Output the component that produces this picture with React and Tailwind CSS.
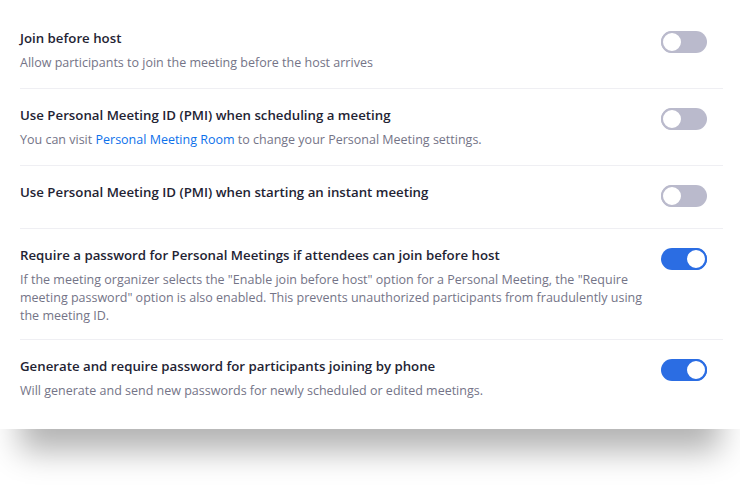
import React, { useState } from "react";

const settings = [
  {
    id: "jbh",
    title: "Join before host",
    desc: "Allow participants to join the meeting before the host arrives",
    on: false,
    pb: "pb-4",
  },
  {
    id: "pmi-schedule",
    title: "Use Personal Meeting ID (PMI) when scheduling a meeting",
    desc: (
      <>
        You can visit{" "}
        <a href="#" className="text-[#0e71eb]">
          Personal Meeting Room
        </a>{" "}
        to change your Personal Meeting settings.
      </>
    ),
    on: false,
    pb: "pb-4",
  },
  {
    id: "pmi-instant",
    title: "Use Personal Meeting ID (PMI) when starting an instant meeting",
    desc: null,
    on: false,
    pb: "pb-[21px]",
  },
  {
    id: "pwd-pmi",
    title: "Require a password for Personal Meetings if attendees can join before host",
    desc: 'If the meeting organizer selects the "Enable join before host" option for a Personal Meeting, the "Require meeting password" option is also enabled. This prevents unauthorized participants from fraudulently using the meeting ID.',
    on: true,
    pb: "pb-[14px]",
  },
  {
    id: "pwd-phone",
    title: "Generate and require password for participants joining by phone",
    desc: "Will generate and send new passwords for newly scheduled or edited meetings.",
    on: true,
    pb: "pb-4",
  },
];

function Toggle({ on, onChange }) {
  return (
    <button
      type="button"
      role="switch"
      aria-checked={on}
      onClick={onChange}
      className={
        "relative mt-[3px] mr-4 h-[22px] w-[46px] shrink-0 rounded-full transition-colors " +
        (on ? "bg-[#2b6de3]" : "bg-[#babacc]")
      }
    >
      <span
        className={
          "absolute top-0 h-[22px] w-[22px] rounded-full bg-white transition-all " +
          (on ? "left-[24px] border-2 border-[#2b6de3]" : "left-0 border-2 border-[#babacc]")
        }
      />
    </button>
  );
}

export default function App() {
  const [state, setState] = useState(() =>
    Object.fromEntries(settings.map((s) => [s.id, s.on]))
  );

  return (
    <div
      className="min-h-[502px] w-[740px] overflow-hidden bg-white"
      style={{ fontFamily: '"Open Sans", "Liberation Sans", sans-serif' }}
    >
      {/* kortet med inställningar */}
      <div className="w-[740px] bg-white pt-3 pb-[13px] pl-5 pr-[17px] shadow-[0_42px_30px_-20px_rgba(0,0,0,0.3)]">
        {settings.map((s, i) => (
          <div
            key={s.id}
            className={
              "flex items-start justify-between gap-2 pt-4 " +
              (i < settings.length - 1 ? "border-b border-[#efeff3] " : "") +
              s.pb
            }
          >
            <div className="min-w-0 max-w-[634px]">
              <div className="text-[13.25px] font-semibold leading-5 text-[#232333]">
                {s.title}
              </div>
              {s.desc && (
                <div className="mt-[6px] text-[12.5px] leading-[18px] text-[#747487]">
                  {s.desc}
                </div>
              )}
            </div>
            <Toggle
              on={state[s.id]}
              onChange={() => setState((p) => ({ ...p, [s.id]: !p[s.id] }))}
            />
          </div>
        ))}
      </div>
    </div>
  );
}
